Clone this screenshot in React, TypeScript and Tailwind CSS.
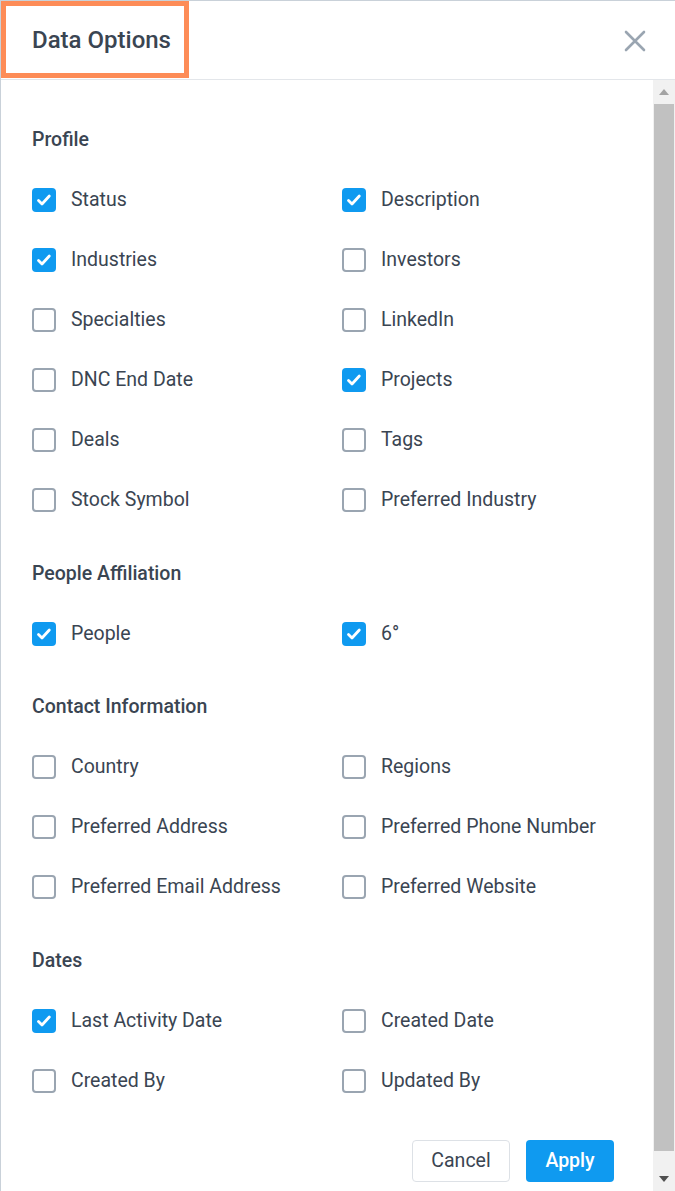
import React from 'react';

type Item = { label: string; checked?: boolean };
type Section = { title: string; items: Item[]; gap: string };

const sections: Section[] = [
    {
        title: 'Profile',
        gap: '',
        items: [
            {label: 'Status', checked: true},
            {label: 'Description', checked: true},
            {label: 'Industries', checked: true},
            {label: 'Investors'},
            {label: 'Specialties'},
            {label: 'LinkedIn'},
            {label: 'DNC End Date'},
            {label: 'Projects', checked: true},
            {label: 'Deals'},
            {label: 'Tags'},
            {label: 'Stock Symbol'},
            {label: 'Preferred Industry'},
        ],
    },
    {
        title: 'People Affiliation',
        gap: 'mt-[32px]',
        items: [
            {label: 'People', checked: true},
            {label: '6°', checked: true},
        ],
    },
    {
        title: 'Contact Information',
        gap: 'mt-[31px]',
        items: [
            {label: 'Country'},
            {label: 'Regions'},
            {label: 'Preferred Address'},
            {label: 'Preferred Phone Number'},
            {label: 'Preferred Email Address'},
            {label: 'Preferred Website'},
        ],
    },
    {
        title: 'Dates',
        gap: 'mt-[32px]',
        items: [
            {label: 'Last Activity Date', checked: true},
            {label: 'Created Date'},
            {label: 'Created By'},
            {label: 'Updated By'},
        ],
    },
];

const Checkbox = ({checked}: { checked?: boolean }) =>
    checked ? (
        <span className="w-[24px] h-[24px] rounded-[4px] bg-[#0f9af0] flex items-center justify-center shrink-0">
            <svg width="16" height="16" viewBox="0 0 16 16" fill="none">
                <path d="M2.5 8.5l3.5 3.5 7.3-8" stroke="white" strokeWidth="2.8" strokeLinecap="round"
                      strokeLinejoin="round"/>
            </svg>
        </span>
    ) : (
        <span className="w-[24px] h-[24px] rounded-[4px] border-2 border-[#9aa5b1] bg-white shrink-0"/>
    );

const App = () => {
    return (
        <div
            className="w-[675px] h-[1191px] bg-white border-l border-t border-[#c9d1d9] flex flex-col overflow-hidden text-[#3a4552] font-['Roboto',sans-serif]">
            <div className="h-[79px] shrink-0 flex items-start justify-between border-b border-[#e3e6ea]">
                <div className="w-[188px] h-[77px] border-[5px] border-[#fd8c57] flex items-center pl-[26px]">
                    <h1 className="text-[24px] font-medium leading-none">Data Options</h1>
                </div>
                <button className="mt-[29px] mr-[29px] p-0">
                    <svg width="22" height="22" viewBox="0 0 22 22" fill="none">
                        <path d="M2 2l18 18M20 2L2 20" stroke="#9aa5b1" strokeWidth="2.6" strokeLinecap="round"/>
                    </svg>
                </button>
            </div>

            <div className="flex-1 flex min-h-0">
                <div className="flex-1 pl-[31px] pt-[48px]">
                    {sections.map(s => (
                        <div key={s.title} className={s.gap}>
                            <h2 className="text-[19.5px] leading-[24px] font-medium mb-[18px]">{s.title}</h2>
                            <div className="grid grid-cols-[310px_1fr]">
                                {s.items.map(item => (
                                    <label key={item.label} className="h-[60px] flex items-center gap-[15px]">
                                        <Checkbox checked={item.checked}/>
                                        <span className="text-[19.5px] leading-none">{item.label}</span>
                                    </label>
                                ))}
                            </div>
                        </div>
                    ))}
                    <div className="flex justify-end gap-[16px] pr-[39px] mt-[29px]">
                        <button
                            className="w-[98px] h-[42px] rounded-[4px] border border-[#dde1e6] bg-white text-[19.5px] text-[#3a4552]">
                            Cancel
                        </button>
                        <button
                            className="w-[88px] h-[42px] rounded-[4px] bg-[#0f9af0] text-[19.5px] font-medium text-white">
                            Apply
                        </button>
                    </div>
                </div>

                <div className="w-[22px] shrink-0 bg-[#f1f1f1] flex flex-col items-center">
                    <div className="h-[24px] flex items-center justify-center">
                        <svg width="10" height="6" viewBox="0 0 10 6">
                            <path d="M5 0L10 6H0z" fill="#a3a3a3"/>
                        </svg>
                    </div>
                    <div className="w-[20px] flex-1 bg-[#c1c1c1]"/>
                    <div className="h-[40px] flex items-end justify-center pb-[9px]">
                        <svg width="10" height="6" viewBox="0 0 10 6">
                            <path d="M0 0H10L5 6z" fill="#505050"/>
                        </svg>
                    </div>
                </div>
            </div>
        </div>
    );
};

export default App;
